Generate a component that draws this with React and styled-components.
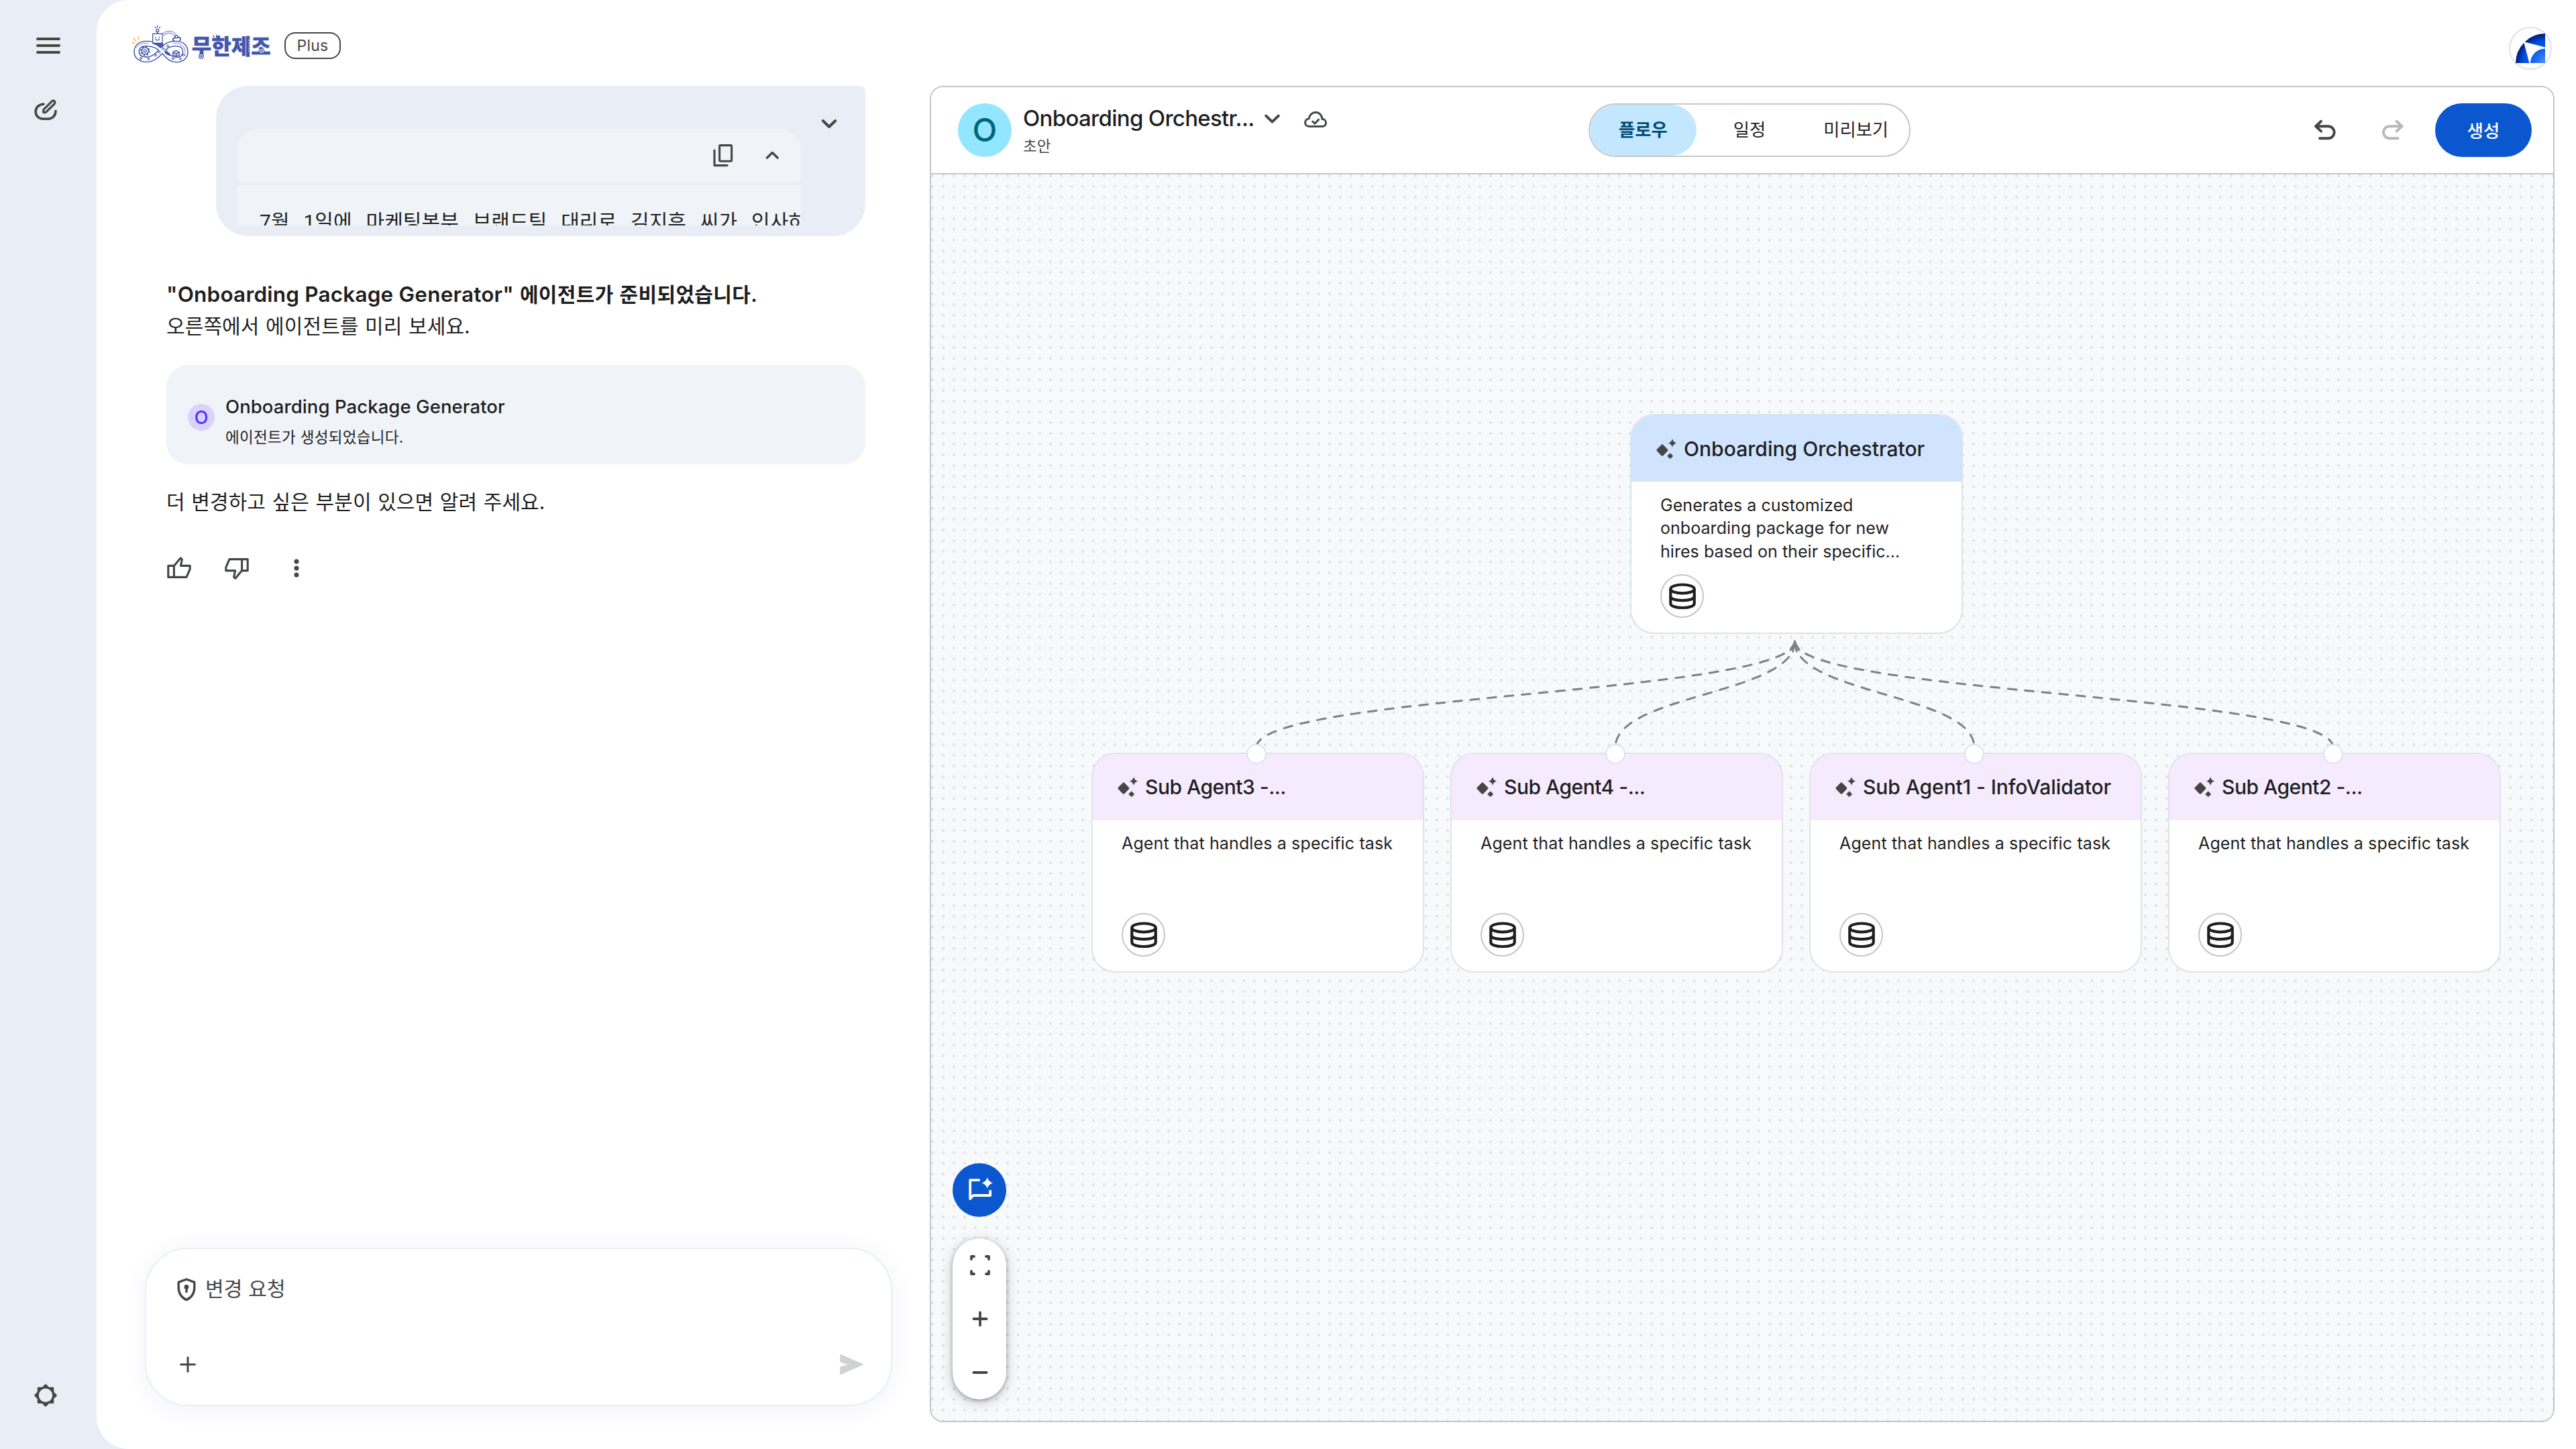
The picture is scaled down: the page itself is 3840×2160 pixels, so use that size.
import React from "react";
import styled, { createGlobalStyle } from "styled-components";

const ink = "#1f1f1f";
const muted = "#444746";
const outline = "#c4c7c5";
const primary = "#0b57d0";
const surface = "#e9eef6";
const surfaceLow = "#f0f4f9";

const GlobalStyle = createGlobalStyle`
  *, *::before, *::after { box-sizing: border-box; }
  html, body { margin: 0; padding: 0; }
  body {
    font-family: Inter, "Noto Sans CJK KR", sans-serif;
    color: ${ink};
    background: ${surface};
  }
`;

const Shell = styled.div`
  display: flex;
  width: 3840px;
  height: 2160px;
  overflow: hidden;
  background: ${surface};
`;

const Sidebar = styled.nav`
  flex: none;
  width: 144px;
  display: flex;
  flex-direction: column;
  align-items: flex-start;
  padding: 44px 0 56px 44px;
`;

const SideSlot = styled.div`
  height: 48px;
  margin-top: ${(p) => p.$top || "0"};
`;

const Page = styled.div`
  flex: 1;
  display: flex;
  flex-direction: column;
  background: #fff;
  border-radius: 48px 0 0 48px;
`;

const TopBar = styled.header`
  flex: none;
  height: 128px;
  display: flex;
  align-items: flex-start;
  padding: 0 36px 0 46px;
`;

const LogoBox = styled.div`
  margin-top: 30px;
  height: 70px;
`;

const LogoText = styled.text`
  font-family: "Noto Sans CJK KR", sans-serif;
  font-weight: 900;
  font-size: 96px;
`;

const PlanChip = styled.span`
  margin: 48px auto 0 14px;
  width: 84px;
  height: 40px;
  border: 2px solid ${muted};
  border-radius: 16px;
  font-size: 23px;
  line-height: 36px;
  letter-spacing: 0.2px;
  text-align: center;
  color: ${muted};
`;

const AccountBadge = styled.div`
  margin-top: 40px;
  width: 64px;
  height: 64px;
  border: 2px solid #e1e1e1;
  border-radius: 50%;
  display: flex;
  align-items: center;
  justify-content: center;
`;

const Body = styled.div`
  flex: 1;
  min-height: 0;
  display: flex;
`;

const Chat = styled.section`
  flex: none;
  width: 1242px;
  display: flex;
  flex-direction: column;
`;

const UserBubble = styled.div`
  flex: none;
  margin-left: 178px;
  width: 968px;
  height: 224px;
  background: ${surface};
  border-radius: 48px 8px 48px 48px;
  padding: 32px 30px 16px 32px;
  display: flex;
  justify-content: space-between;
`;

const CodeBlock = styled.div`
  width: 840px;
  margin-top: 32px;
  display: flex;
  flex-direction: column;
  gap: 4px;
`;

const CodeBar = styled.div`
  height: 80px;
  display: flex;
  align-items: center;
  justify-content: flex-end;
  gap: 25px;
  padding-right: 19px;
  background: ${surfaceLow};
  border-radius: 32px 32px 8px 8px;
`;

const CodeText = styled.div`
  height: 60px;
  overflow: hidden;
  padding: 31px 0 0 33px;
  background: ${surfaceLow};
  font-family: Roboto, "Noto Sans CJK KR", sans-serif;
  font-size: 30px;
  line-height: 48px;
  letter-spacing: 0.05px;
  word-spacing: 13.4px;
  white-space: nowrap;
`;

const Reply = styled.div`
  margin: 63px 96px 0 104px;
  display: flex;
  flex-direction: column;
`;

const Line = styled.p`
  margin: 0;
  font-size: 30px;
  line-height: 46px;
  padding-bottom: 2px;
  letter-spacing: 0.1px;
  word-spacing: 1px;
  white-space: nowrap;
`;

const Headline = styled(Line)`
  line-height: 48px;
  padding: 0;
  font-weight: 600;
  letter-spacing: 0.35px;
`;

const Latin = styled.span`
  font-size: 31.5px;
  letter-spacing: 0.2px;
  word-spacing: 0;
`;

const AgentCard = styled.div`
  margin: 33px 0;
  height: 148px;
  padding: 42px 32px 0;
  border-radius: 32px;
  background: ${surfaceLow};
  display: flex;
  align-items: flex-start;
  gap: 16px;
`;

const Monogram = styled.span`
  flex: none;
  display: flex;
  align-items: center;
  justify-content: center;
  border-radius: 50%;
  width: ${(p) => p.$size}px;
  height: ${(p) => p.$size}px;
  margin-top: ${(p) => p.$top || 0}px;
  font-size: ${(p) => p.$font}px;
  font-weight: 500;
  line-height: 1;
  color: ${(p) => p.$fg};
  background: ${(p) => p.$bg};
`;

const AgentName = styled.div`
  font-size: 27.5px;
  line-height: 40px;
  font-weight: 500;
  white-space: nowrap;
  letter-spacing: 0.08px;
`;

const AgentStatus = styled.div`
  margin-top: 9px;
  font-size: 22.5px;
  line-height: 33px;
  letter-spacing: 0.3px;
`;

const Feedback = styled.div`
  margin: 50px 0 0 -5px;
  height: 48px;
  display: flex;
  gap: 38px;
`;

const Composer = styled.div`
  margin: auto 56px 64px 72px;
  height: 236px;
  border: 2px solid ${surface};
  border-radius: 64px;
  background: #fff;
  box-shadow: 0 4px 32px 4px rgba(60, 90, 180, 0.06);
  padding: 35px 36px 36px 40px;
  display: flex;
  flex-direction: column;
  justify-content: space-between;
`;

const ComposerRow = styled.div`
  height: 48px;
  display: flex;
  align-items: center;
  gap: 8px;
  font-size: 30px;
  line-height: 46px;
  letter-spacing: 0.2px;
  color: ${muted};
  justify-content: ${(p) => (p.$spread ? "space-between" : "flex-start")};
`;

const Panel = styled.section`
  flex: none;
  width: 2422px;
  height: 1992px;
  border: 2px solid ${outline};
  border-radius: 20px;
  overflow: hidden;
  display: flex;
  flex-direction: column;
`;

const PanelHeader = styled.header`
  flex: none;
  height: 130px;
  border-bottom: 2px solid ${outline};
  background: #fff;
  display: flex;
  align-items: center;
  padding: 0 32px 0 40px;
`;

const Identity = styled.div`
  flex: none;
  width: 940px;
  height: 80px;
  display: flex;
  gap: 17px;
`;

const TitleRow = styled.div`
  height: 44px;
  display: flex;
  align-items: center;
`;

const Title = styled.h1`
  margin: 0;
  width: 347px;
  font-size: 33px;
  line-height: 44px;
  font-weight: 500;
  white-space: nowrap;
  letter-spacing: -0.7px;
`;

const Draft = styled.div`
  margin-top: 4px;
  font-size: 22.5px;
  line-height: 31px;
  color: ${muted};
`;

const Tabs = styled.div`
  width: 480px;
  height: 80px;
  border: 2px solid ${outline};
  border-radius: 40px;
  display: flex;
  overflow: hidden;
`;

const Tab = styled.button`
  flex: 1;
  border: 0;
  padding: 0 0 1px;
  border-radius: 38px;
  font: inherit;
  font-size: 26.3px;
  line-height: 40px;
  font-weight: ${(p) => (p.$active ? 700 : 400)};
  color: ${(p) => (p.$active ? "#004a77" : ink)};
  background: ${(p) => (p.$active ? "#c2e7ff" : "transparent")};
`;

const Actions = styled.div`
  margin-left: auto;
  display: flex;
  align-items: center;
`;

const ActionSlot = styled.div`
  height: 48px;
  margin-right: ${(p) => p.$gap}px;
`;

const CreateButton = styled.button`
  width: 144px;
  height: 80px;
  border: 0;
  border-radius: 40px;
  background: ${primary};
  color: #fff;
  font: inherit;
  font-size: 26.3px;
  font-weight: 500;
  padding: 0 0 1px;
`;

const Canvas = styled.div`
  flex: 1;
  position: relative;
  background-color: #f8f9fb;
  background-image: radial-gradient(circle at 2px 2px, #e3e3e3 1.7px, rgba(227, 227, 227, 0) 2.3px);
  background-size: 16px 16px;
`;

const EdgeLayer = styled.svg`
  position: absolute;
  left: 0;
  top: 0;
`;

const Node = styled.article`
  position: absolute;
  left: ${(p) => p.$x}px;
  top: ${(p) => p.$y}px;
  width: 496px;
  height: 328px;
  border: 2px solid #dce3ec;
  border-radius: 36px;
  background: #fff;
  display: flex;
  flex-direction: column;
`;

const NodeHead = styled.div`
  flex: none;
  height: 99px;
  border-radius: 34px 34px 0 0;
  background: ${(p) => (p.$root ? "#d0e3ff" : "#f6ebfe")};
  display: flex;
  align-items: center;
  gap: 11px;
  padding: 0 0 ${(p) => (p.$root ? 0 : 1)}px 37px;
  font-size: 30px;
  line-height: 40px;
  font-weight: 500;
  white-space: nowrap;
  letter-spacing: ${(p) => p.$track}px;
`;

const NodeText = styled.p`
  margin: ${(p) => (p.$root ? 18 : 17)}px 43px 0;
  height: ${(p) => (p.$root ? 103 : 104)}px;
  font-size: 25px;
  line-height: 34.4px;
  letter-spacing: ${(p) => (p.$root ? 0.05 : 0.14)}px;
  white-space: pre;
`;

const SourceBadge = styled.div`
  margin: 17px 0 0 43px;
  width: 65px;
  height: 65px;
  border: 2px solid ${outline};
  border-radius: 50%;
  display: flex;
  align-items: center;
  justify-content: center;
`;

const Port = styled.span`
  position: absolute;
  left: 229px;
  top: -15px;
  width: 30px;
  height: 30px;
  border: 2px solid #dce3ec;
  border-radius: 50%;
  background: #fff;
`;

const CanvasTools = styled.div`
  position: absolute;
  left: 32px;
  bottom: 32px;
  display: flex;
  flex-direction: column;
  gap: 32px;
`;

const ChatFab = styled.button`
  width: 80px;
  height: 80px;
  padding: 0;
  border: 0;
  border-radius: 50%;
  background: ${primary};
  display: flex;
  align-items: center;
  justify-content: center;
`;

const ZoomPill = styled.div`
  width: 80px;
  height: 240px;
  border-radius: 40px;
  background: #fff;
  box-shadow: 0 2px 6px rgba(0, 0, 0, 0.3), 0 4px 16px 4px rgba(0, 0, 0, 0.13);
  display: flex;
  flex-direction: column;
  align-items: center;
  justify-content: space-around;
  padding-left: 1px;
`;

const IconSvg = styled.svg`
  display: block;
  flex: none;
  fill: none;
  stroke: ${(p) => p.$color || muted};
  stroke-width: ${(p) => p.$weight || 3.6};
  stroke-linecap: round;
  stroke-linejoin: round;
  margin-left: ${(p) => p.$left || 0}px;
`;

const Icon = ({ size = 48, color, weight, left, children }) => (
  <IconSvg width={size} height={size} viewBox={`0 0 ${size} ${size}`} $color={color} $weight={weight} $left={left}>
    {children}
  </IconSvg>
);

const MenuIcon = () => (
  <Icon weight={4}>
    <path d="M12 14H44M12 24H44M12 34H44" />
  </Icon>
);

const ComposeIcon = () => (
  <Icon weight={3.6}>
    <path d="M21 15.2C13.8 15.6 9.2 20.2 9.2 26.4C9.2 32.8 14 37.2 20.4 37.2H27.6C34 37.2 39 32.6 39 25.6" />
    <path strokeWidth="3.2" d="M20.8 27.4V23.6L33.4 10.9C34.9 9.4 37.3 10 37.8 12.1C38.1 13.4 37.6 14.3 36.9 15L24.6 27.2C23.6 27.8 22.6 27.8 20.8 27.4Z" />
  </Icon>
);

const GearIcon = () => (
  <Icon weight={3.4}>
    <circle cx="24" cy="24" r="11.9" />
    {[0, 45, 90, 135, 180, 225, 270, 315].map((a) => (
      <path key={a} transform={`rotate(${a} 24 24)`} d="M21.8 11.2L24 9L26.2 11.2Z" fill={muted} />
    ))}
  </Icon>
);

const Thumb = ({ down }) => (
  <Icon weight={3.1}>
    <g transform={down ? "rotate(180 24 24)" : undefined}>
      <path d="M7.8 20.4H16.4V37.4H7.8Z" />
      <path d="M16.4 20.4L26.2 8.8L28.4 10.8L26.4 20.4H40.2V25.2L35 37.4H16.4" />
    </g>
  </Icon>
);

const bandPath =
  "M164 142C140 114 116 105 85 105C57 105 41 120 41 141C41 163 59 176 85 176C122 176 142 147 163 126C180 107 198 105 217 105C244 105 259 120 259 142C259 163 244 177 219 177C194 177 180 160 164 142";

const LogoArt = () => (
  <svg width="220" height="70" viewBox="0 0 660 210" fill="none" stroke="#3447a4" strokeWidth="3.5" strokeLinecap="round" strokeLinejoin="round">
    <g stroke="#f7b733" strokeWidth="4.5">
      <path d="M22 99L32 104M28 81L38 94M48 74L51 86" />
    </g>
    <path d="M124 30L127 36M134 24V33M146 30L142 36" />
    <circle cx="134" cy="47" r="6" />
    <path d="M134 54V61" />
    <path strokeWidth="13" strokeDasharray="4 3" strokeLinecap="butt" d="M159 66C176 48 206 50 217 73" />
    <path stroke="#fff" strokeWidth="5" d="M159 66C176 48 206 50 217 73" />
    <circle cx="219" cy="74" r="6" fill="#fff" />
    <path strokeWidth="5" d="M212 79C200 82 202 92 209 94M226 78C236 74 240 84 234 92" />
    <path strokeWidth="26" d={bandPath} />
    <path stroke="#fff" strokeWidth="18" d={bandPath} />
    <path fill="#4a5bb2" d="M113 103H158V118L148 124Q132 108 113 104Z" />
    <rect x="113" y="61" width="43" height="42" fill="#fff" />
    <path d="M126 75V79M142 75V79M125 86Q134 94 143 86" />
    <path fill="#4a5bb2" d="M166 138L180 148L190 158L172 150Z" />
    <path strokeWidth="2" d="M40 124C48 108 70 102 92 104M205 103C240 97 262 122 258 148" />
    {[[60, 171], [94, 173], [126, 157], [142, 143], [160, 128], [180, 116], [203, 172], [236, 173], [251, 156]].map(([x, y]) => (
      <circle key={x} cx={x} cy={y} r="4.5" strokeWidth="3" />
    ))}
    <circle cx="79" cy="138" r="18" strokeWidth="7" strokeDasharray="7 7" strokeLinecap="butt" />
    <circle cx="79" cy="138" r="15" fill="#fff" />
    <circle cx="79" cy="138" r="6" />
    <path fill="#c9cfee" d="M203 143L217 136L232 143V156L218 163L203 156ZM203 143L218 149L232 143M218 149V163" />
    <LogoText x="287" y="152" textLength="354" lengthAdjust="spacingAndGlyphs" fill="#4456b0" stroke="#3a4ca8" strokeWidth="1">무한제조</LogoText>
    <path d="M383 70L388 77M398 66V74M411 69L406 77" />
    <circle cx="330" cy="161" r="10" fill="#fff" />
    <circle cx="330" cy="161" r="3" />
    <path stroke="#fff" strokeWidth="3" d="M542 90H550M542 102H550M542 114H550M542 126H550M542 138H550" />
    <circle cx="600" cy="138" r="11" fill="#fff" strokeDasharray="5 2.5" />
    <circle cx="600" cy="138" r="4" />
  </svg>
);

const AccountArt = () => (
  <svg width="44" height="44" viewBox="0 0 44 44">
    <defs>
      <radialGradient id="outerBlue" gradientUnits="userSpaceOnUse" cx="44" cy="44" r="44">
        <stop offset="0.55" stopColor="#0058f0" />
        <stop offset="0.75" stopColor="#004fdc" />
        <stop offset="1" stopColor="#001a78" />
      </radialGradient>
      <radialGradient id="innerBlue" gradientUnits="userSpaceOnUse" cx="44" cy="44" r="22">
        <stop offset="0" stopColor="#4a90ff" />
        <stop offset="1" stopColor="#0c5be8" />
      </radialGradient>
    </defs>
    <path fill="url(#outerBlue)" d="M13.6 12.4A44 44 0 0 1 44 0V20.6Z" />
    <path fill="url(#outerBlue)" d="M12.4 13.8A44 44 0 0 0 0 44H20.4Z" />
    <path fill="url(#innerBlue)" d="M44 22.4V44H22A22 22 0 0 1 44 22.4Z" />
  </svg>
);

const SparkIcon = () => (
  <svg width="30" height="30" viewBox="0 0 30 30" fill={muted}>
    <path d="M8.9 8.2Q9.6 8.2 10.4 9.2L16.6 15.6Q18.2 17.1 16.6 18.6L10.4 25Q8.9 26.6 7.4 25L1.2 18.6Q-.4 17.1 1.2 15.6L7.4 9.2Q8.2 8.2 8.9 8.2Z" />
    <path d="M24 0Q25.2 5.3 30.3 6.5Q25.2 7.7 24 13Q22.8 7.7 17.7 6.5Q22.8 5.3 24 0Z" />
    <path d="M20.7 21.8L24.8 25.8L20.7 29.8L16.6 25.8Z" stroke={muted} strokeWidth="0.8" strokeLinejoin="round" />
  </svg>
);

const DatabaseIcon = () => (
  <svg width="40" height="40" viewBox="0 0 40 40" fill="none" stroke={ink} strokeWidth="4.2">
    <ellipse cx="20" cy="8.9" rx="17.7" ry="6.4" />
    <path d="M2.3 8.9V30.4C2.3 34.4 10 37 20 37S37.7 34.4 37.7 30.4V8.9" />
    <path d="M2.3 20C2.3 24 10 26.2 20 26.2S37.7 24 37.7 20" />
  </svg>
);

/* Canvas coordinates: origin at the top left of the dotted area. */
const tip = { x: 1287.5, y: 696 };
const subAgents = [
  { id: 3, x: 239, name: "Sub Agent3 -...", track: -0.5 },
  { id: 4, x: 774, name: "Sub Agent4 -...", track: -0.5 },
  { id: 1, x: 1309, name: "Sub Agent1 - InfoValidator", track: -0.08 },
  { id: 2, x: 1844, name: "Sub Agent2 -...", track: -0.5 },
];
const rootText = "Generates a customized\nonboarding package for new\nhires based on their specific...";

const AgentNode = ({ x, y, root, name, text, track }) => (
  <Node $x={x} $y={y}>
    <NodeHead $root={root} $track={track}>
      <SparkIcon />
      <span>{name}</span>
    </NodeHead>
    <NodeText $root={root}>{text}</NodeText>
    <SourceBadge>
      <DatabaseIcon />
    </SourceBadge>
    {!root && <Port />}
  </Node>
);

const Edges = () => (
  <EdgeLayer width="2418" height="1858" fill="none" stroke="#808080" strokeLinecap="round" strokeWidth="3">
    {subAgents.map((a) => {
      const x = a.x + 246;
      return (
        <path
          key={a.id}
          strokeDasharray="12.8 12.8"
          d={`M${tip.x} ${tip.y}C${tip.x} ${tip.y + 79} ${x} ${tip.y + 79} ${x} ${tip.y + 158}`}
        />
      );
    })}
    <path d="M1287.5 697.5L1281 709M1287.5 697.5L1294 709M1287.5 697.5L1284.6 711M1287.5 697.5L1290.4 711" />
  </EdgeLayer>
);

export default function App() {
  return (
    <>
      <GlobalStyle />
      <Shell>
        <Sidebar>
          <SideSlot><MenuIcon /></SideSlot>
          <SideSlot $top="48px"><ComposeIcon /></SideSlot>
          <SideSlot $top="auto"><GearIcon /></SideSlot>
        </Sidebar>
        <Page>
          <TopBar>
            <LogoBox><LogoArt /></LogoBox>
            <PlanChip>Plus</PlanChip>
            <AccountBadge><AccountArt /></AccountBadge>
          </TopBar>
          <Body>
            <Chat>
              <UserBubble>
                <CodeBlock>
                  <CodeBar>
                    <Icon weight={3.1}>
                      <rect x="18.6" y="8.6" width="18" height="23.6" rx="1.5" />
                      <path d="M11 16V38.6H30" />
                    </Icon>
                    <Icon weight={3.4}><path d="M16.4 27.2L24.3 19.6L32.2 27.2" /></Icon>
                  </CodeBar>
                  <CodeText>7월 1일에 마케팅본부 브랜드팀 대리로 김지후 씨가 인사하</CodeText>
                </CodeBlock>
                <Icon weight={4}><path d="M14.8 20L24 29L33.2 20" /></Icon>
              </UserBubble>
              <Reply>
                <Headline>
                  <Latin>"Onboarding Package Generator"</Latin> 에이전트가 준비되었습니다.
                </Headline>
                <Line>오른쪽에서 에이전트를 미리 보세요.</Line>
                <AgentCard>
                  <Monogram $size={40} $top={16} $font={27} $fg="#4f2eff" $bg="#d9d2ff">O</Monogram>
                  <div>
                    <AgentName>Onboarding Package Generator</AgentName>
                    <AgentStatus>에이전트가 생성되었습니다.</AgentStatus>
                  </div>
                </AgentCard>
                <Line>더 변경하고 싶은 부분이 있으면 알려 주세요.</Line>
                <Feedback>
                  <Thumb />
                  <Thumb down />
                  <Icon left={3}>
                    <g fill={muted} stroke="none">
                      <circle cx="24" cy="14" r="3.5" />
                      <circle cx="24" cy="24" r="3.5" />
                      <circle cx="24" cy="34" r="3.5" />
                    </g>
                  </Icon>
                </Feedback>
              </Reply>
              <Composer>
                <ComposerRow>
                  <Icon size={40} weight={3.4}>
                    <path d="M20 6L31.8 10.4V19C31.8 27 27 33.8 20 36.6C13 33.8 8.2 27 8.2 19V10.4Z" />
                    <circle cx="20" cy="17.4" r="2.2" fill={muted} strokeWidth="2.4" />
                    <path d="M20 18V24.6" />
                  </Icon>
                  <span>변경 요청</span>
                </ComposerRow>
                <ComposerRow $spread>
                  <Icon size={44} weight={3}><path d="M22 11.6V32.4M11.6 22H32.4" /></Icon>
                  <Icon size={44} weight={1.6} color="#d0d3d1">
                    <path fill="#d0d3d1" d="M5 7.6L38 22L5 36.6V26L18 22L5 18Z" />
                  </Icon>
                </ComposerRow>
              </Composer>
            </Chat>
            <Panel>
              <PanelHeader>
                <Identity>
                  <Monogram $size={80} $font={48} $fg="#00677d" $bg="#93e6ff">O</Monogram>
                  <div>
                    <TitleRow>
                      <Title>Onboarding Orchestr...</Title>
                      <Icon weight={4}><path d="M15.2 20.6L24.5 29.6L33.8 20.6" /></Icon>
                      <Icon weight={3} left={17}>
                        <path d="M15 36.5C10.8 36.5 8.6 33.8 8.6 30.8C8.6 27.6 10.9 25.2 14.2 24.8C15 19.4 19 15.6 24 15.6C29.8 15.6 33.8 20 34 25.6C37.4 25.8 39.6 28 39.6 31C39.6 34.2 37.3 36.5 34 36.5Z" />
                        <path d="M19.6 29L23 32.2L28.6 26.4" />
                      </Icon>
                    </TitleRow>
                    <Draft>초안</Draft>
                  </div>
                </Identity>
                <Tabs>
                  <Tab $active>플로우</Tab>
                  <Tab>일정</Tab>
                  <Tab>미리보기</Tab>
                </Tabs>
                <Actions>
                  <ActionSlot $gap={53}>
                    <Icon weight={3.9}><path d="M18 10.8L10 18.2L18 25.6M10.6 18.2H28.6A9 9 0 0 1 28.6 36.2H16" /></Icon>
                  </ActionSlot>
                  <ActionSlot $gap={39}>
                    <Icon weight={3.9} color="#b7b9b8"><path d="M29.6 10.8L37.6 18.2L29.6 25.6M37 18.2H19A9 9 0 0 0 19 36.2H31.6" /></Icon>
                  </ActionSlot>
                  <CreateButton>생성</CreateButton>
                </Actions>
              </PanelHeader>
              <Canvas>
                <Edges />
                <AgentNode root x={1042} y={357} name="Onboarding Orchestrator" track={0.04} text={rootText} />
                {subAgents.map((a) => (
                  <AgentNode key={a.id} x={a.x} y={862} name={a.name} track={a.track} text="Agent that handles a specific task" />
                ))}
                <CanvasTools>
                  <ChatFab>
                    <Icon color="#fff" weight={3.8}>
                      <path d="M23.2 9.2H10.2V37L14.8 32H40.2V25.6" />
                      <path stroke="none" fill="#fff" d="M35.8 5Q37.6 11.6 44 13.4Q37.6 15.2 35.8 21.6Q34 15.2 27.6 13.4Q34 11.6 35.8 5Z" />
                    </Icon>
                  </ChatFab>
                  <ZoomPill>
                    <Icon weight={3.8}><path d="M11 15V11H15M33 11H37V15M37 33V37H33M15 37H11V33" /></Icon>
                    <Icon weight={3.8}><path d="M24 14.4V33.6M14.4 24H33.6" /></Icon>
                    <Icon weight={3.8}><path d="M14.4 24H33.6" /></Icon>
                  </ZoomPill>
                </CanvasTools>
              </Canvas>
            </Panel>
          </Body>
        </Page>
      </Shell>
    </>
  );
}
